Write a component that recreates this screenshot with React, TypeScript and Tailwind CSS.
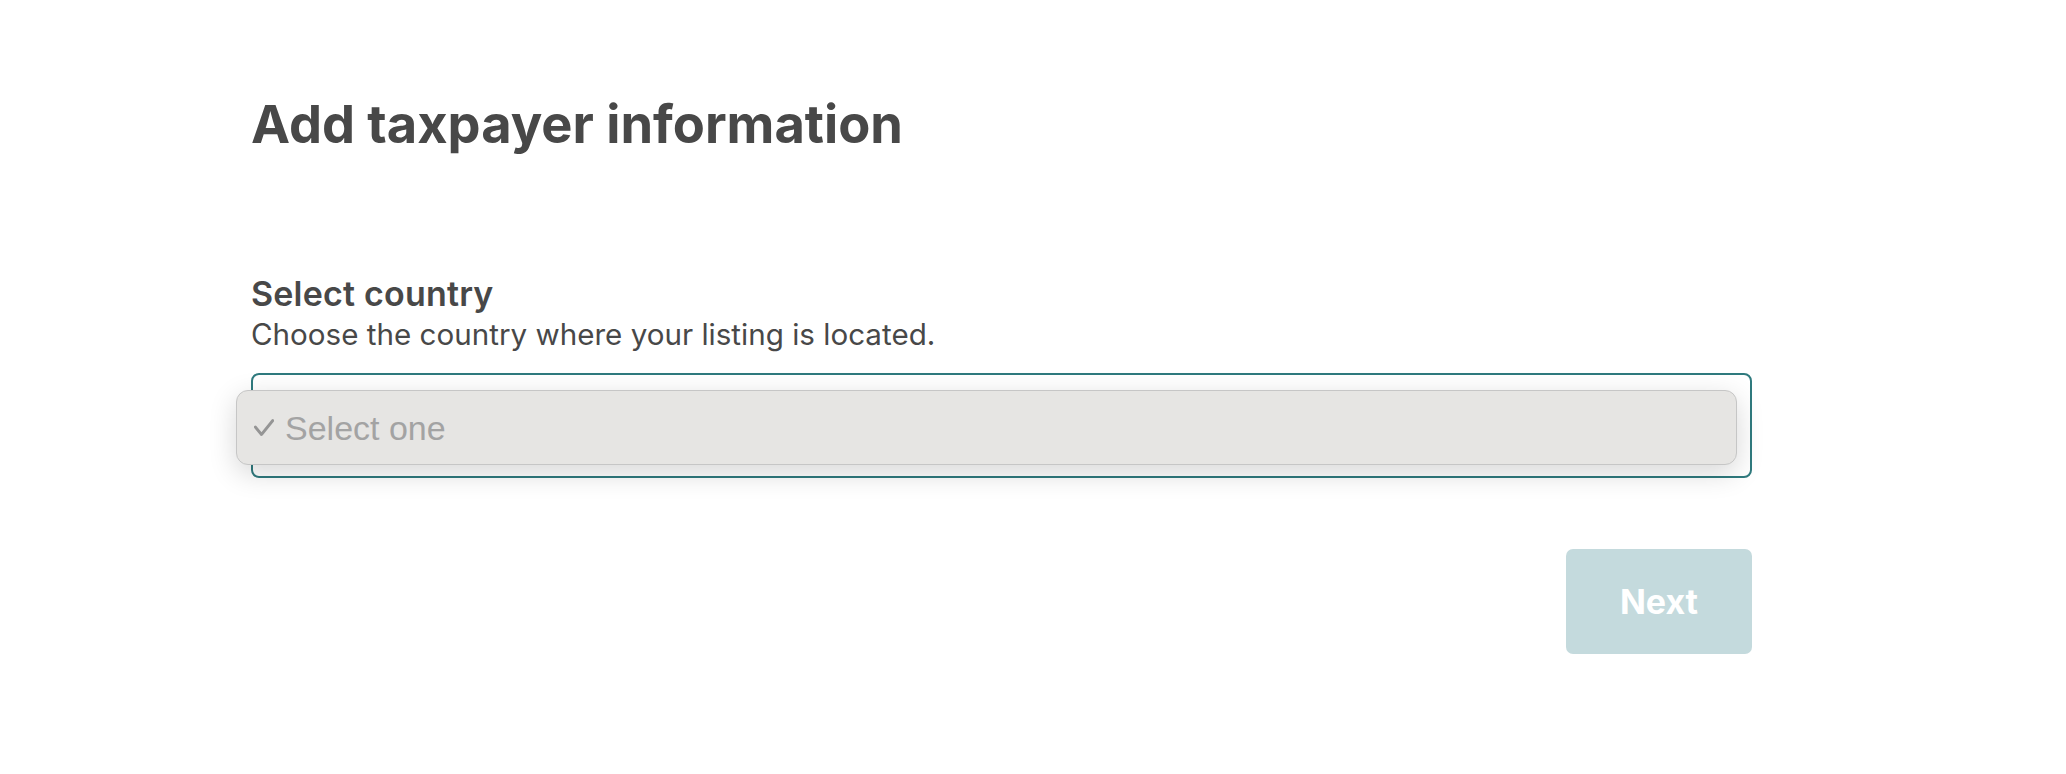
import React from "react";

export default function App() {
  return (
    <div className="w-[2066px] h-[774px] bg-white overflow-hidden" style={{ fontFamily: "Inter, 'Noto Sans', sans-serif" }}>
      <div className="pl-[251px] pt-[98px] w-[1752px] flex flex-col">
        <h1 className="text-[52.4px] leading-[53px] font-bold text-[#484848]">
          Add taxpayer information
        </h1>
        <div className="mt-[125px] flex flex-col">
          <div className="text-[34px] leading-[36px] font-semibold text-[#484848] tracking-[0.2px] mb-[4px]">Select country</div>
          <div className="text-[29.6px] leading-[36px] font-normal text-[#484848]">
            Choose the country where your listing is located.
          </div>
        </div>
        <div className="mt-[21px] relative h-[105px] border-2 border-[#2f7a7e] rounded-[8px] bg-white">
          <div
            className="absolute left-[-17px] top-[15px] w-[1501px] h-[75px] bg-[#e6e5e3] border border-[#c6c6c6] rounded-[12px] shadow-[0_8px_28px_rgba(0,0,0,0.16)] flex items-center pl-[17px] gap-[11px]"
            style={{ fontFamily: "'Liberation Sans', Arial, sans-serif" }}
          >
            <svg width="20" height="17" viewBox="0 0 20 17" fill="none">
              <polyline points="1.3,8 7.5,15.5 18.8,1.5" stroke="#959595" strokeWidth="2.8" strokeLinecap="round" strokeLinejoin="round" />
            </svg>
            <span className="text-[34px] leading-none text-[#a3a3a3]">Select one</span>
          </div>
        </div>
        <div className="mt-[71px] flex justify-end">
          <button className="w-[186px] h-[105px] rounded-[7px] bg-[#c4dadd] text-white text-[34px] font-bold flex items-center justify-center">
            Next
          </button>
        </div>
      </div>
    </div>
  );
}
